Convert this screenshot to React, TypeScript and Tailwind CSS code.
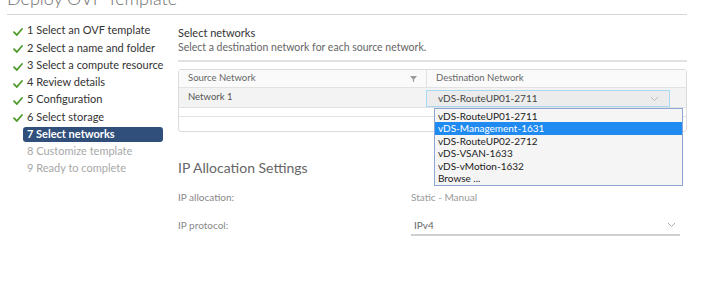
import React from "react";

const font = { fontFamily: "Lato, 'Liberation Sans', sans-serif" };

const Check = () => (
  <svg width="10" height="8" viewBox="0 0 10 8" className="mt-[3px]">
    <path d="M1 4.2 L3.8 7 L9 1" stroke="#4f9a2c" strokeWidth="1.8" fill="none" strokeLinecap="round" />
  </svg>
);

const Chevron = ({ color = "#aaa" }: { color?: string }) => (
  <svg width="9" height="6" viewBox="0 0 9 6">
    <path d="M1 1 L4.5 4.5 L8 1" stroke={color} strokeWidth="1" fill="none" />
  </svg>
);

const steps = [
  { n: "1 Select an OVF template", s: "done" },
  { n: "2 Select a name and folder", s: "done" },
  { n: "3 Select a compute resource", s: "done" },
  { n: "4 Review details", s: "done" },
  { n: "5 Configuration", s: "done" },
  { n: "6 Select storage", s: "done" },
  { n: "7 Select networks", s: "active" },
  { n: "8 Customize template", s: "todo" },
  { n: "9 Ready to complete", s: "todo" },
];

const options = [
  "vDS-RouteUP01-2711",
  "vDS-Management-1631",
  "vDS-RouteUP02-2712",
  "vDS-VSAN-1633",
  "vDS-vMotion-1632",
  "Browse ...",
];

export default function App() {
  return (
    <div className="w-[711px] h-[282px] overflow-hidden bg-white" style={font}>
      <div className="pl-[7px]">
        <div className="-mt-[14px] text-[18px] leading-[24px] font-light text-[#707070] whitespace-nowrap">Deploy OVF Template</div>
        <div className="mt-[4px] h-px w-[680px] bg-[#d4d4d4]" />
      </div>
      <div className="flex">
        <div className="w-[178px] pt-[7px] pl-[13px]">
          {steps.map((st) =>
            st.s === "active" ? (
              <div key={st.n} className="h-[17.25px] flex items-center">
                <div className="ml-[10px] w-[140px] h-[15px] rounded-[3px] bg-[#30507b] pl-[4px] flex items-center text-[11px] font-bold text-white whitespace-nowrap">
                  {st.n}
                </div>
              </div>
            ) : (
              <div key={st.n} className="h-[17.25px] flex items-center">
                <div className="w-[14px] flex">{st.s === "done" ? <Check /> : null}</div>
                <span className={`text-[11px] whitespace-nowrap ${st.s === "done" ? "text-[#333]" : "text-[#a8a8a8]"}`}>{st.n}</span>
              </div>
            )
          )}
        </div>
        <div className="flex-1">
          <div className="pt-[11px] text-[11px] leading-[14px] text-[#333]">Select networks</div>
          <div className="text-[10.5px] leading-[14px] text-[#666]">Select a destination network for each source network.</div>
          <div className="mt-[6px] h-[2px] w-[509px] bg-[#e2e2e2]" />
          <div className="mt-[7px] w-[509px] border border-[#dcdcdc] rounded-[3px]">
            <div className="h-[18px] flex bg-[#fafafa] border-b border-[#e2e2e2] text-[9.5px] text-[#666]">
              <div className="w-[247px] flex items-center justify-between pl-[9px] pr-[9px]">
                <span>Source Network</span>
                <svg width="7" height="6" viewBox="0 0 7 6"><path d="M0 0 H7 L4 3.5 V6 H3 V3.5 Z" fill="#999" /></svg>
              </div>
              <div className="flex-1 flex items-center border-l border-[#e2e2e2] pl-[9px]">Destination Network</div>
            </div>
            <div className="h-[20px] flex bg-[#f3f3f3] border-b border-[#e2e2e2]">
              <div className="w-[247px] flex items-center pl-[9px] text-[9.5px] text-[#555]">Network 1</div>
              <div className="flex-1 relative pt-[2px]">
                <div className="h-[17px] w-[244px] border border-[#a7daf2] bg-[#ececec] flex items-center justify-between pl-[11px] pr-[10px] text-[10px] text-[#444]">
                  <span>vDS-RouteUP01-2711</span>
                  <Chevron color="#bbb" />
                </div>
                <div className="absolute left-[8px] top-[20px] w-[249px] border border-[#8da6d4] bg-[#f5f5f5] py-[1px] z-10">
                  {options.map((o, i) => (
                    <div
                      key={o}
                      className={`h-[12.4px] flex items-center pl-[3px] text-[10px] leading-[12.4px] ${i === 1 ? "bg-[#1f8af0] text-white" : "text-[#222]"}`}
                    >
                      {o}
                    </div>
                  ))}
                </div>
              </div>
            </div>
            <div className="h-[9px] border-b border-[#e2e2e2]" />
            <div className="h-[14px]" />
          </div>
          <div className="mt-[28px] text-[14px] leading-[16px] text-[#666]">IP Allocation Settings</div>
          <div className="mt-[14px] flex text-[10px] leading-[14px]">
            <div className="w-[233px] text-[#888]">IP allocation:</div>
            <div className="text-[#999]">Static - Manual</div>
          </div>
          <div className="mt-[14px] flex text-[10px] leading-[14px]">
            <div className="w-[233px] text-[#888]">IP protocol:</div>
            <div className="w-[269px] border-b-2 border-[#d0d0d0] flex items-center justify-between pl-[3px] pr-[4px] pb-[2px] text-[#666]">
              <span>IPv4</span>
              <Chevron color="#aaa" />
            </div>
          </div>
        </div>
      </div>
    </div>
  );
}
